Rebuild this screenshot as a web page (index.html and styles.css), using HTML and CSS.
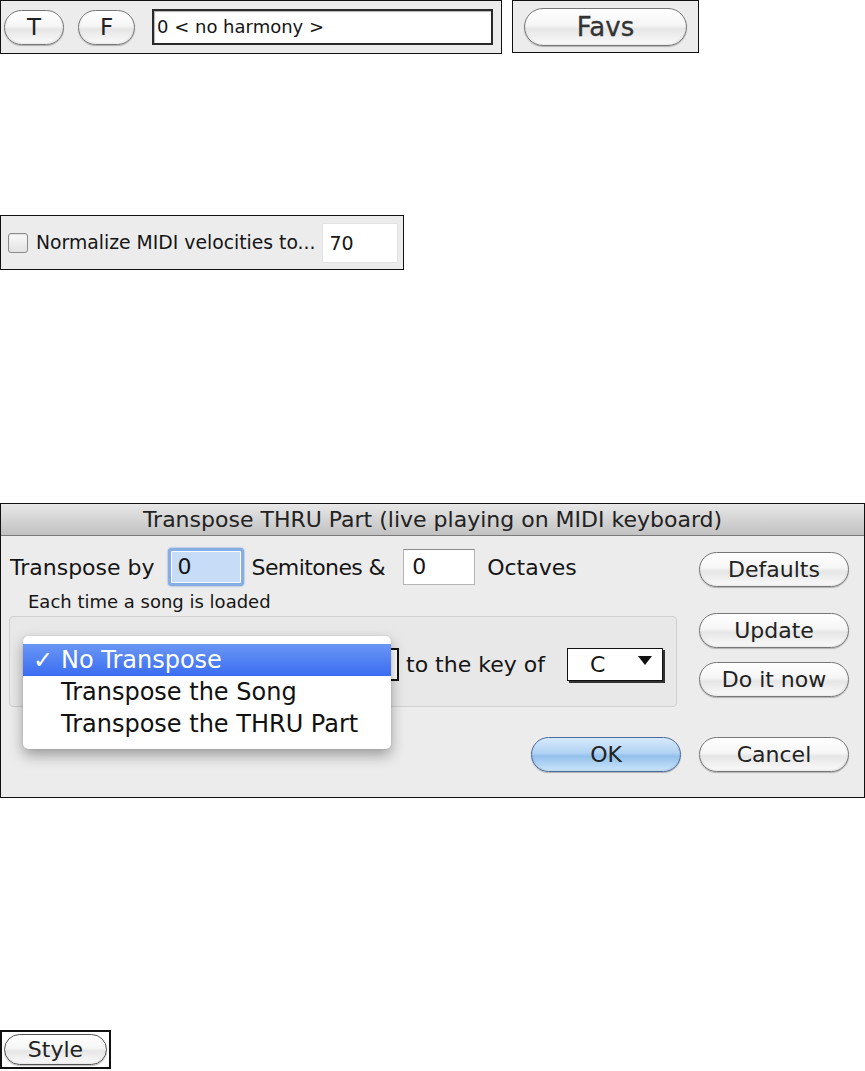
FILE: index.html
```html
<!DOCTYPE html>
<html>
<head>
    <title>Transpose THRU Part</title>
    <link rel="stylesheet" href="styles.css">
</head>
<body>
    <div class="strip">
        <div class="panel harmony-panel">
            <button class="pill small-pill">T</button>
            <button class="pill small-pill">F</button>
            <div class="harmony-field">0 &lt; no harmony &gt;</div>
        </div>
        <div class="panel favs-panel">
            <button class="pill favs-pill">Favs</button>
        </div>
    </div>

    <div class="panel normalize-panel">
        <span class="checkbox"></span>
        <span class="normalize-label">Normalize MIDI velocities to...</span>
        <div class="velocity-field">70</div>
    </div>

    <div class="dialog">
        <div class="titlebar">Transpose THRU Part (live playing on MIDI keyboard)</div>
        <div class="dialog-body">
            <div class="row-transpose">
                <span>Transpose by</span>
                <div class="num-field focused">0</div>
                <span class="semitones">Semitones &amp;</span>
                <div class="num-field octave-field">0</div>
                <span>Octaves</span>
            </div>
            <div class="side top-side">
                <button class="pill dlg-pill">Defaults</button>
            </div>

            <div class="load-section">
                <div class="caption">Each time a song is loaded</div>
                <div class="group">
                    <div class="popup"></div>
                    <span class="key-label">to the key of</span>
                    <div class="key-select">
                        <span>C</span>
                        <span class="arrow"></span>
                    </div>
                    <ul class="menu">
                        <li class="selected"><span class="check">&#10003;</span>No Transpose</li>
                        <li>Transpose the Song</li>
                        <li>Transpose the THRU Part</li>
                    </ul>
                </div>
            </div>
            <div class="side mid-side">
                <button class="pill dlg-pill">Update</button>
                <button class="pill dlg-pill">Do it now</button>
            </div>

            <div class="ok-cell">
                <button class="pill dlg-pill ok-pill">OK</button>
            </div>
            <div class="side">
                <button class="pill dlg-pill">Cancel</button>
            </div>
        </div>
    </div>

    <div class="style-box">
        <button class="pill style-pill">Style</button>
    </div>
</body>
</html>
```

FILE: styles.css
```css
body {
    margin: 0;
    font-family: "DejaVu Sans", Verdana, sans-serif;
    color: #151515;
    background: #fff;
    width: 865px;
}
.strip {
    display: flex;
    gap: 10px;
}
.panel {
    background: #ececec;
    border: 1.5px solid #111;
    box-sizing: border-box;
}
.pill {
    font-family: "DejaVu Sans", Verdana, sans-serif;
    color: #222;
    border: 1px solid #777;
    border-radius: 20px;
    background: linear-gradient(#ffffff, #f6f6f6 45%, #e6e6e6 55%, #fafafa);
    box-shadow: 0 1px 1px rgba(0,0,0,0.25), inset 0 -1px 2px rgba(0,0,0,0.08);
    padding: 0;
    cursor: pointer;
}
.harmony-panel {
    width: 502px;
    height: 54px;
    display: flex;
    align-items: center;
    padding: 0 0 0 3px;
}
.small-pill {
    width: 60px;
    height: 35px;
    font-size: 23px;
    margin-right: 14px;
}
.small-pill + .small-pill {
    width: 57px;
    margin-right: 17px;
}
.harmony-field {
    width: 341px;
    height: 36px;
    box-sizing: border-box;
    border: 2px solid #2a2a2a;
    background: #fff;
    box-shadow: inset 1px 1px 1px rgba(0,0,0,0.3);
    font-size: 18px;
    line-height: 32px;
    padding-left: 3px;
}
.favs-panel {
    width: 187px;
    height: 53px;
    display: flex;
    align-items: center;
    padding-left: 11px;
}
.favs-pill {
    width: 163px;
    height: 38px;
    font-size: 26px;
    color: #333;
    -webkit-text-stroke: 0.3px #333;
}

.normalize-panel {
    margin-top: 161px;
    width: 404px;
    height: 55px;
    display: flex;
    align-items: center;
    padding-left: 7px;
}
.checkbox {
    width: 18px;
    height: 18px;
    border: 1px solid #8a8a8a;
    border-radius: 3px;
    background: linear-gradient(#fafafa, #e2e2e2);
    box-shadow: inset 0 1px 1px rgba(0,0,0,0.1);
    margin-right: 8px;
}
.normalize-label {
    font-size: 18.8px;
    margin-right: 6px;
}
.velocity-field {
    width: 76px;
    height: 40px;
    box-sizing: border-box;
    background: #fff;
    border: 1px solid #e2e2e2;
    font-size: 19px;
    line-height: 38px;
    padding-left: 7px;
}

.dialog {
    margin-top: 233px;
    width: 865px;
    height: 295px;
    box-sizing: border-box;
    border: 1px solid #111;
    background: #ececec;
}
.titlebar {
    height: 31px;
    border-bottom: 1px solid #7a7a7a;
    background: linear-gradient(#e8e8e8, #d0d0d0 60%, #c2c2c2);
    text-align: center;
    font-size: 22px;
    line-height: 31px;
    color: #222;
}
.dialog-body {
    display: grid;
    grid-template-columns: 672px 150px;
    column-gap: 18px;
    padding: 11px 0 0 8px;
    font-size: 22px;
}
.row-transpose {
    display: flex;
    align-items: center;
    height: 40px;
    padding-left: 1px;
    white-space: nowrap;
}
.semitones {
    letter-spacing: -0.6px;
}
.num-field {
    width: 72px;
    height: 36px;
    box-sizing: border-box;
    background: #fff;
    border: 1px solid #b5b5b5;
    border-top-color: #8d8d8d;
    line-height: 34px;
    padding-left: 8px;
}
.num-field.focused {
    width: 76px;
    height: 38px;
    margin: 0 8px 0 13px;
    background: #c6dcf7;
    border: 3px solid #86aee4;
    border-radius: 4px;
    box-shadow: 0 0 2px #5b8ed6, inset 0 0 0 1px #fff;
    line-height: 32px;
    padding-left: 7px;
}
.octave-field {
    margin: 0 12px 0 18px;
}
.side {
    display: flex;
    flex-direction: column;
}
.top-side {
    justify-content: center;
    padding-top: 4px;
}
.dlg-pill {
    width: 150px;
    height: 35px;
    font-size: 22px;
}
.load-section {
    margin-top: 5px;
}
.caption {
    font-size: 18px;
    line-height: 19px;
    padding-left: 19px;
    margin-bottom: 5px;
}
.group {
    position: relative;
    width: 668px;
    height: 91px;
    box-sizing: border-box;
    border: 1px solid #cfcfcf;
    border-radius: 4px;
    background: #e8e8e8;
    display: flex;
    align-items: center;
    padding: 6px 0 0 14px;
}
.popup {
    width: 375px;
    height: 33px;
    box-sizing: border-box;
    border: 2px solid #111;
    background: #fff;
}
.key-label {
    margin: 0 22px 0 7px;
    white-space: nowrap;
}
.key-select {
    width: 96px;
    height: 33px;
    box-sizing: border-box;
    border: 1px solid #111;
    box-shadow: 2px 2px 0 #333;
    background: #fff;
    display: flex;
    align-items: center;
    justify-content: space-between;
    padding: 0 10px 0 22px;
}
.arrow {
    width: 0;
    height: 0;
    border-left: 7px solid transparent;
    border-right: 7px solid transparent;
    border-top: 9px solid #111;
    margin-top: -8px;
}
.menu {
    position: absolute;
    left: 13px;
    top: 19px;
    width: 368px;
    margin: 0;
    padding: 8px 0 9px;
    list-style: none;
    background: #fff;
    border-radius: 5px;
    box-shadow: 0 6px 14px rgba(0,0,0,0.35), 0 0 1px rgba(0,0,0,0.3);
    font-size: 24px;
}
.menu li {
    height: 32px;
    line-height: 32px;
    padding-left: 38px;
    color: #111;
    white-space: nowrap;
}
.menu li.selected {
    background: linear-gradient(#6a97f4, #3a6cf2);
    color: #fff;
    padding-left: 10px;
}
.check {
    display: inline-block;
    width: 28px;
}
.mid-side {
    padding-top: 26px;
    gap: 14px;
}
.ok-cell {
    display: flex;
    justify-content: flex-end;
    margin-top: 30px;
}
.ok-pill {
    border-color: #4b6b9c;
    background: linear-gradient(#d7e9fb, #b2d3f4 45%, #93c1ec 55%, #cbe6fb);
}
.ok-cell + .side {
    margin-top: 30px;
}

.style-box {
    margin-top: 232px;
    width: 111px;
    height: 39px;
    box-sizing: border-box;
    border: 2px solid #111;
    display: flex;
    align-items: center;
    padding-left: 2px;
}
.style-pill {
    width: 103px;
    height: 31px;
    font-size: 22px;
    border-color: #555;
    color: #222;
}
```
